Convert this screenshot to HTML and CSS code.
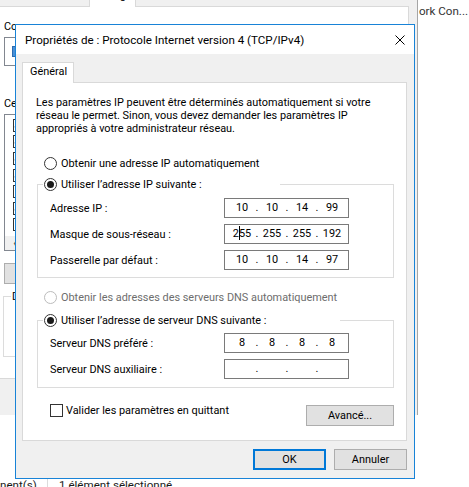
FILE: index.html
```html
<!DOCTYPE html>
<html lang="fr">
<head>
<meta charset="utf-8">
<title>Propriétés de : Protocole Internet version 4 (TCP/IPv4)</title>
<link rel="stylesheet" href="styles.css">
</head>
<body>
<div class="ork">ork Con...</div>

<div class="bgwin">
  <div class="bgtab">Partage</div>
  <div class="bgpanel">
    <div class="bgtxt t1">Co</div>
    <div class="bgbox"><span class="nic"></span></div>
    <div class="bgtxt t2">Ce</div>
    <div class="bglist">
      <div class="li"><span class="cb on"></span></div>
      <div class="li"><span class="cb on"></span></div>
      <div class="li"><span class="cb on"></span></div>
      <div class="li"><span class="cb on"></span></div>
      <div class="li"><span class="cb"></span></div>
      <div class="li"><span class="cb on"></span></div>
      <div class="li"><span class="cb"></span></div>
      <div class="hscroll"><span class="arr">&#x2039;</span></div>
    </div>
    <div class="bgbtn"></div>
    <fieldset class="bgdesc"><legend>D</legend></fieldset>
  </div>
</div>

<div class="status"><span class="st1">nent(s)</span><span class="sep"></span><span class="st2">1 élément sélectionné</span></div>

<div class="dlg">
  <div class="titlebar">
    <span class="title">Propriétés de : Protocole Internet version 4 (TCP/IPv4)</span>
    <svg class="close" width="10" height="10" viewBox="0 0 10 10"><path d="M0.5 0.5 L9.5 9.5 M9.5 0.5 L0.5 9.5" stroke="#000" stroke-width="1" fill="none"/></svg>
  </div>
  <div class="dbody">
    <div class="tabs"><div class="tab">Général</div></div>
    <div class="panel">
      <p class="intro">Les paramètres IP peuvent être déterminés automatiquement si votre<br>réseau le permet. Sinon, vous devez demander les paramètres IP<br>appropriés à votre administrateur réseau.</p>

      <div class="radio-row r1"><span class="rb"></span><span>Obtenir une adresse IP automatiquement</span></div>

      <fieldset class="grp g1">
        <legend class="lg1"><span class="radio-row inl"><span class="rb on"></span><span>Utiliser l’adresse IP suivante :</span></span></legend>
        <div class="rows">
          <div class="iprow"><span class="lbl">Adresse IP :</span>
            <div class="ip"><span>10</span><span>.</span><span>10</span><span>.</span><span>14</span><span>.</span><span>99</span></div></div>
          <div class="iprow"><span class="lbl">Masque de sous-réseau :</span>
            <div class="ip"><span>2<i class="caret"></i>55</span><span>.</span><span>255</span><span>.</span><span>255</span><span>.</span><span>192</span></div></div>
          <div class="iprow"><span class="lbl">Passerelle par défaut :</span>
            <div class="ip"><span>10</span><span>.</span><span>10</span><span>.</span><span>14</span><span>.</span><span>97</span></div></div>
        </div>
      </fieldset>

      <div class="radio-row r3 disabled"><span class="rb"></span><span>Obtenir les adresses des serveurs DNS automatiquement</span></div>

      <fieldset class="grp g2">
        <legend class="lg2"><span class="radio-row inl"><span class="rb on"></span><span>Utiliser l’adresse de serveur DNS suivante :</span></span></legend>
        <div class="rows">
          <div class="iprow"><span class="lbl">Serveur DNS préféré :</span>
            <div class="ip"><span>8</span><span>.</span><span>8</span><span>.</span><span>8</span><span>.</span><span>8</span></div></div>
          <div class="iprow"><span class="lbl">Serveur DNS auxiliaire :</span>
            <div class="ip"><span></span><span>.</span><span></span><span>.</span><span></span><span>.</span><span></span></div></div>
        </div>
      </fieldset>

      <div class="checkrow">
        <label class="chk"><span class="cbx"></span><span>Valider les paramètres en quittant</span></label>
        <div class="btn adv">Avancé...</div>
      </div>
    </div>
    <div class="foot">
      <div class="btn ok">OK</div>
      <div class="btn">Annuler</div>
    </div>
  </div>
</div>
</body>
</html>
```
FILE: styles.css
```css
* { box-sizing: border-box; }
html, body { margin: 0; padding: 0; }
body {
  width: 469px;
  height: 487px;
  overflow: hidden;
  position: relative;
  background: #fff;
  font-family: Roboto, "Liberation Sans", sans-serif;
  font-size: 10.9px;
  color: #000;
}

/* ---------- background window ---------- */
.ork {
  position: absolute;
  left: 419px;
  top: 4px;
  line-height: 14px;
  font-size: 11.6px;
  color: #333;
  white-space: nowrap;
}
.bgwin {
  position: absolute;
  left: 0;
  top: 0;
  width: 418px;
  height: 415px;
  background: #f0f0f0;
  border-right: 1px solid #a5a5a5;
}
.bgtab {
  position: absolute;
  left: 89px;
  top: -12px;
  width: 47px;
  height: 19px;
  background: #fff;
  border: 1px solid #d9d9d9;
  border-bottom: none;
  z-index: 1;
  text-align: center;
  line-height: 14px;
}
.bgpanel {
  position: absolute;
  left: -1px;
  top: 6px;
  width: 410px;
  height: 373px;
  background: #fff;
  border: 1px solid #d9d9d9;
  padding-left: 4px;
  white-space: nowrap;
}
.bgtxt { line-height: 13px; }
.t1 { margin-top: 13px; }
.bgbox {
  margin-top: 4px;
  height: 29px;
  width: 380px;
  border: 1px solid #828790;
  display: flex;
  align-items: center;
  padding-left: 7px;
}
.nic {
  width: 12px;
  height: 11px;
  background: #4a90d6;
  border: 1px solid #2c6cb0;
  flex: none;
}
.t2 { margin-top: 31px; }
.bglist {
  margin-top: 4px;
  width: 380px;
  height: 137px;
  border: 1px solid #828790;
  padding-top: 2px;
  padding-left: 8px;
}
.li {
  height: 16.6px;
  display: flex;
  align-items: center;
}
.cb {
  width: 13px;
  height: 13px;
  border: 1px solid #333;
  background: #fff;
  position: relative;
  flex: none;
}
.cb.on::after {
  content: "";
  position: absolute;
  left: 3px;
  top: 0px;
  width: 4px;
  height: 8px;
  border: solid #222;
  border-width: 0 2px 2px 0;
  transform: rotate(40deg);
}
.hscroll {
  margin-top: 3px;
  margin-left: -8px;
  height: 14px;
  background: #f0f0f0;
  display: flex;
  align-items: center;
  padding-left: 8px;
}
.arr { font-size: 16px; line-height: 12px; color: #606060; font-weight: bold; }
.bgbtn {
  margin-top: 12px;
  width: 90px;
  height: 21px;
  background: #e1e1e1;
  border: 1px solid #adadad;
}
.bgdesc {
  margin: 6px 0 0 -1px;
  width: 382px;
  height: 67px;
  border: 1px solid #dcdcdc;
  padding: 0 8px;
}
.bgdesc legend { padding: 0 1px; line-height: 13px; margin-left: -1px; }

.status {
  position: absolute;
  left: 0;
  top: 478px;
  height: 14px;
  line-height: 13px;
  display: flex;
  align-items: center;
  white-space: nowrap;
  font-size: 11.6px;
  color: #1a1a1a;
}
.st1 { width: 47px; }
.sep { width: 1px; height: 13px; background: #dcdcdc; }
.st2 { margin-left: 11px; }

/* ---------- dialog ---------- */
.dlg {
  position: absolute;
  left: 15px;
  top: 24px;
  width: 400px;
  height: 455px;
  border: 1px solid #1883d7;
  background: #f0f0f0;
  display: flex;
  flex-direction: column;
  z-index: 2;
}
.titlebar {
  height: 29px;
  flex: none;
  background: #fff;
  display: flex;
  align-items: center;
  padding-left: 9px;
  font-size: 11.6px;
}
.close { margin-left: auto; margin-right: 9px; flex: none; }
.dbody {
  flex: 1;
  padding: 8px 7px 0 6px;
  display: flex;
  flex-direction: column;
}
.tabs { display: flex; height: 21px; flex: none; }
.tab {
  width: 52px;
  height: 21px;
  background: #fff;
  border: 1px solid #d9d9d9;
  border-bottom: none;
  padding-left: 7px;
  line-height: 18px;
  position: relative;
  z-index: 1;
}
.panel {
  margin-top: -1px;
  height: 359px;
  flex: none;
  background: #fff;
  border: 1px solid #d9d9d9;
}
.intro {
  margin: 13px 0 0 13px;
  line-height: 13px;
}
.radio-row {
  display: flex;
  align-items: center;
  height: 16px;
  gap: 4px;
  margin-left: 21px;
  white-space: nowrap;
}
.radio-row.inl { margin-left: 1px; }
.r1 { margin-top: 20px; }
.rb {
  width: 13px;
  height: 13px;
  border: 1px solid #333;
  border-radius: 50%;
  background: #fff;
  position: relative;
  flex: none;
}
.rb.on::after {
  content: "";
  position: absolute;
  left: 2px;
  top: 2px;
  width: 7px;
  height: 7px;
  border-radius: 50%;
  background: #1a1a1a;
}
.disabled { color: #6d6d6d; }
.disabled .rb { border-color: #bcbcbc; }

.grp {
  margin: 0 0 0 14px;
  width: 357px;
  min-width: 0;
  border: 1px solid #dcdcdc;
  padding: 6px 12px 7px 12px;
}
.grp legend { padding: 0; height: 16px; margin-left: -7px; }
.lg1 { width: 237px; }
.lg2 { width: 297px; }
.g1 { margin-top: 5px; }
.g2 { margin-top: 7px; padding-top: 5px; padding-bottom: 8px; }
.rows { display: flex; flex-direction: column; gap: 6px; }
.iprow { display: flex; align-items: center; height: 20px; }
.lbl { width: 174px; flex: none; }
.ip {
  width: 125px;
  height: 20px;
  border: 1px solid #7a7a7a;
  background: #fff;
  display: grid;
  grid-template-columns: 24px 6px 24px 6px 24px 6px 24px;
  padding-left: 5px;
  line-height: 18px;
  text-align: center;
}
.caret {
  display: inline-block;
  width: 1px;
  height: 14px;
  background: #000;
  vertical-align: -3px;
  margin-right: -1px;
}
.r3 { margin-top: 11px; }

.checkrow {
  display: flex;
  align-items: flex-start;
  justify-content: space-between;
  margin-top: 14px;
}
.chk {
  display: flex;
  align-items: center;
  height: 16px;
  gap: 3px;
  margin-left: 27px;
}
.cbx {
  width: 13px;
  height: 13px;
  border: 1px solid #333;
  background: #fff;
  flex: none;
}
.btn {
  width: 73px;
  height: 21px;
  background: #e1e1e1;
  border: 1px solid #adadad;
  text-align: center;
  line-height: 19px;
  flex: none;
}
.adv { width: 88px; margin-top: 3px; margin-right: 12px; }
.ok { border: 2px solid #0078d7; line-height: 17px; }
.foot {
  display: flex;
  justify-content: flex-end;
  gap: 8px;
  margin-top: 8px;
}
```
